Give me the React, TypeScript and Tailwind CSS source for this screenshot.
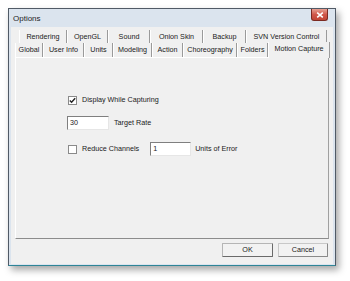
import React from "react";

const row1 = [
  { t: "Rendering", w: 48 },
  { t: "OpenGL", w: 41 },
  { t: "Sound", w: 42 },
  { t: "Onion Skin", w: 53 },
  { t: "Backup", w: 43 },
  { t: "SVN Version Control", w: 81 },
];
const row2 = [
  { t: "Global", w: 28 },
  { t: "User Info", w: 41 },
  { t: "Units", w: 29 },
  { t: "Modeling", w: 39 },
  { t: "Action", w: 31 },
  { t: "Choreography", w: 54 },
  { t: "Folders", w: 31 },
];

function Tab({ t, w }: { t: string; w: number }) {
  return (
    <div
      className="h-full flex items-center justify-center border-r border-r-[#9a9a9a] border-l border-l-white shrink-0"
      style={{ width: w }}
    >
      {t}
    </div>
  );
}

function Check({ checked }: { checked?: boolean }) {
  return (
    <div className="w-[9px] h-[9px] bg-white border border-[#8a8a8a] flex items-center justify-center shrink-0">
      {checked && (
        <svg width="7" height="7" viewBox="0 0 7 7">
          <path d="M0.8 3.4 L2.6 5.3 L6.2 1.2" stroke="#222" strokeWidth="1.4" fill="none" />
        </svg>
      )}
    </div>
  );
}

function Field({ v, w }: { v: string; w: number }) {
  return (
    <div
      className="h-[14px] bg-white border border-t-[#7f7f7f] border-l-[#7f7f7f] border-r-[#e6e6e6] border-b-[#e6e6e6] flex items-center pl-[2px] shrink-0"
      style={{ width: w }}
    >
      {v}
    </div>
  );
}

function Btn({ t, w, def }: { t: string; w: number; def?: boolean }) {
  return (
    <div
      className={
        "h-[14px] flex items-center justify-center bg-[#f2f2f2] border rounded-[1px] " +
        (def
          ? "border-t-[#b5b5b5] border-l-[#b5b5b5] border-r-[#6a6a6a] border-b-[#6a6a6a]"
          : "border-t-[#c8c8c8] border-l-[#c8c8c8] border-r-[#8a8a8a] border-b-[#8a8a8a]")
      }
      style={{ width: w }}
    >
      {t}
    </div>
  );
}

export default function App() {
  return (
    <div
      className="w-[350px] h-[281px] bg-white pt-[8px] pl-[8px] text-[#1a1a1a] text-[7.2px] leading-none"
      style={{ fontFamily: '"Liberation Sans", Arial, sans-serif' }}
    >
      <div className="w-[328px] h-[258px] flex flex-col border border-[#505a66] border-b-[#2e8597] bg-[#dbe4ee] shadow-[3px_4px_7px_rgba(0,0,0,0.35)]">
        {/* title bar */}
        <div className="h-[18px] flex items-start justify-between pl-[4px] pr-[7px] shrink-0">
          <div className="text-[8px] text-[#1e1e1e] pt-[6px]">Options</div>
          <div className="w-[17px] h-[12px] rounded-b-[3px] border border-t-0 border-[#7b2a22] bg-gradient-to-b from-[#e5a093] via-[#d0574a] to-[#c14535] flex items-center justify-center">
            <svg width="8" height="6" viewBox="0 0 8 6">
              <path d="M1.2 0.6 L6.8 5.4 M6.8 0.6 L1.2 5.4" stroke="white" strokeWidth="1.6" />
            </svg>
          </div>
        </div>
        {/* client */}
        <div className="flex-1 mx-[2px] mb-[1px] bg-[#f0f0f0] flex flex-col pt-[3px] px-[4px]">
          {/* tab row 1 */}
          <div className="h-[13px] flex pl-[4px] shrink-0">
            {row1.map((r) => (
              <Tab key={r.t} {...r} />
            ))}
          </div>
          {/* tab row 2 */}
          <div className="h-[14px] flex items-end shrink-0">
            {row2.map((r) => (
              <Tab key={r.t} {...r} />
            ))}
            <div className="w-[62px] h-[16px] flex items-start pt-[3px] justify-center border-l border-l-white border-r border-r-[#9a9a9a] bg-[#f0f0f0] relative top-[1px] shrink-0">
              Motion Capture
            </div>
          </div>
          {/* panel */}
          <div className="h-[182px] border border-l-white border-t-white border-r-[#a0a0a0] border-b-[#8c8c8c] pl-[52px] pt-[37px] flex flex-col shrink-0">
            <div className="flex items-center gap-[5px] h-[10px]">
              <Check checked />
              <span>Display While Capturing</span>
            </div>
            <div className="flex items-center gap-[5px] mt-[11px] -ml-[1px]">
              <Field v="30" w={42} />
              <span>Target Rate</span>
            </div>
            <div className="flex items-center mt-[12px]">
              <Check />
              <span className="ml-[5px]">Reduce Channels</span>
              <div className="ml-[11px]">
                <Field v="1" w={41} />
              </div>
              <span className="ml-[4px]">Units of Error</span>
            </div>
          </div>
          {/* buttons */}
          <div className="flex justify-end gap-[5px] mt-[4px] pr-[1px]">
            <Btn t="OK" w={51} def />
            <Btn t="Cancel" w={50} />
          </div>
        </div>
      </div>
    </div>
  );
}
